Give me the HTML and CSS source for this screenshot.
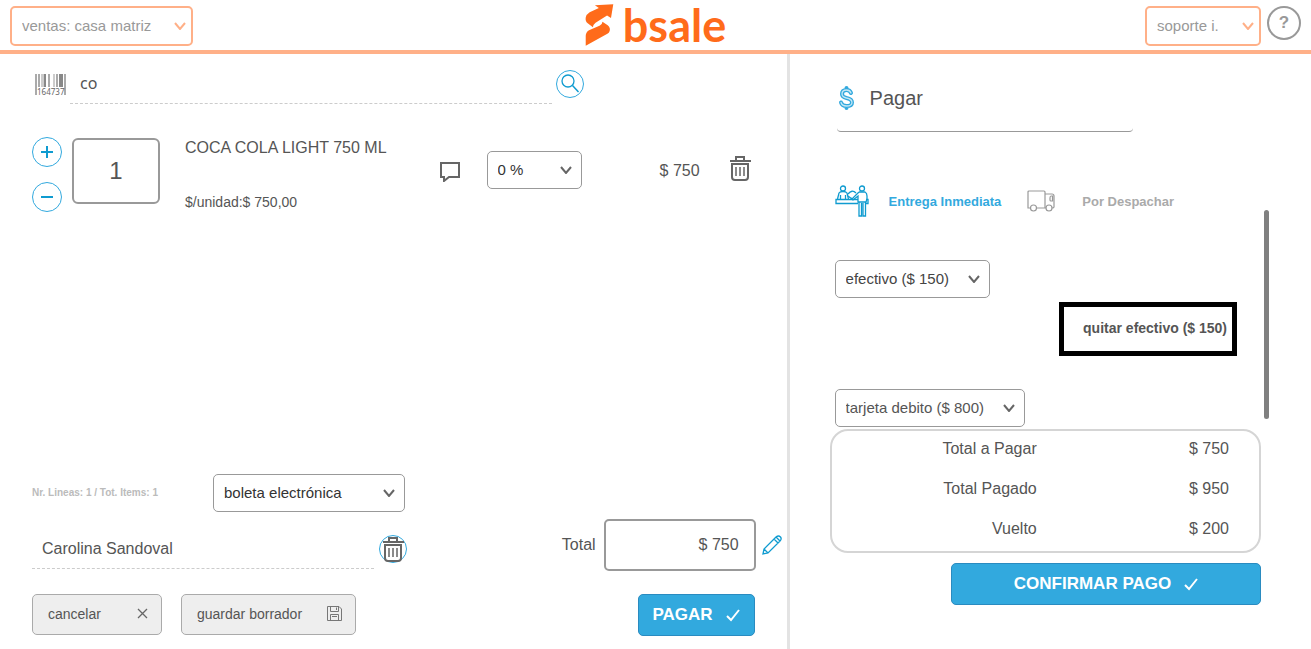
FILE: index.html
```html
<!DOCTYPE html>
<html lang="es">
<head>
  <meta charset="UTF-8">
  <meta name="viewport" content="width=device-width, initial-scale=1.0">
  <title>bsale</title>
  <link rel="stylesheet" href="styles.css">
</head>
<body>

<header class="topbar">
  <div class="topbar-left">
    <select class="select select-naranjo select-sucursal" aria-label="Sucursal">
      <option>ventas: casa matriz</option>
    </select>
  </div>
  <a class="logo" href="#">
    <svg width="29" height="42" viewBox="75 11 86 128" fill="#ff6b1a" aria-hidden="true">
      <path d="M160 12 L153 54 L141 46 L106 68 Q98 74 98 82 L82 70 Q74 63 76 52 Q77 43 88 36 L116 23 L104 15 Z"/>
      <path d="M127 65 L143 76 Q152 84 149 93 Q147 99 142 102 L76 138 L76 108 Q76 97 86 91 L118 77 Q127 73 127 65 Z"/>
    </svg>
    <span>bsale</span>
  </a>
  <div class="topbar-right">
    <select class="select select-naranjo select-usuario" aria-label="Usuario">
      <option>soporte i.</option>
    </select>
    <button class="btn-ayuda" type="button">?</button>
  </div>
</header>

<main class="pos">

  <section class="venta">
    <div class="buscador">
      <svg class="barcode" width="31" height="22" viewBox="0 0 31 22" aria-hidden="true">
        <g fill="#aaa">
          <rect x="0" width="2" height="21"/><rect x="3" width="2" height="13"/><rect x="6" width="3" height="13" fill="#ccc"/>
          <rect x="9" width="2" height="13" fill="#888"/><rect x="13" width="2" height="13"/><rect x="18" width="2" height="13" fill="#ccc"/>
          <rect x="21" width="2" height="13"/><rect x="24" width="4" height="13" fill="#888"/><rect x="29" width="2" height="21"/>
        </g>
        <text x="2" y="21" font-size="8" font-family="Noto Sans, sans-serif" fill="#666">164737</text>
      </svg>
      <input class="input-buscar" type="text" value="co" aria-label="Buscar producto">
      <button class="btn-circulo btn-buscar" type="button" aria-label="Buscar">
        <svg width="20" height="20" viewBox="0 0 20 20" fill="none" stroke="#0f9bd0">
          <circle cx="8" cy="7" r="6" stroke-width="1.300"/>
          <path d="M12.500 11.500 L18.500 18" stroke-width="1.500"/>
        </svg>
      </button>
    </div>

    <div class="item">
      <div class="item-botones">
        <button class="btn-circulo" type="button" aria-label="Agregar uno">
          <svg width="14" height="14" viewBox="0 0 14 14" stroke="#0f9bd0" stroke-width="2"><path d="M1 7 H13 M7 1 V13"/></svg>
        </button>
        <button class="btn-circulo" type="button" aria-label="Quitar uno">
          <svg width="14" height="14" viewBox="0 0 14 14" stroke="#0f9bd0" stroke-width="2"><path d="M1 7 H13"/></svg>
        </button>
      </div>
      <input class="input-cantidad" type="text" value="1" aria-label="Cantidad">
      <div class="item-nombre">
        <p>COCA COLA LIGHT 750 ML</p>
        <p class="item-unidad">$/unidad:$ 750,00</p>
      </div>
      <button class="btn-icono btn-comentario" type="button" aria-label="Comentario">
        <svg width="20" height="20" viewBox="0 0 20 20" fill="none" stroke="#666" stroke-width="2"><path d="M1 1 H19 V15 H9 L4 19 V15 H1 Z"/></svg>
      </button>
      <select class="select select-descuento" aria-label="Descuento">
        <option>0 %</option>
      </select>
      <span class="item-precio">$ 750</span>
      <button class="btn-icono btn-eliminar" type="button" aria-label="Eliminar">
        <svg width="21" height="26" viewBox="0 0 21 26" fill="none" stroke="#666" stroke-width="2">
          <path d="M0 6 H21 M6 6 V2 H14 V6 M2 9 H18 V22 Q18 25 15 25 H5 Q2 25 2 22 Z"/>
          <path d="M6 12 V21 M10 12 V21 M14 12 V21" stroke-width="1.500"/>
        </svg>
      </button>
    </div>

    <div class="pie">
      <div class="pie-fila">
        <span class="contador">Nr. Lineas: 1 / Tot. Items: 1</span>
        <select class="select select-documento" aria-label="Tipo de documento">
          <option>boleta electrónica</option>
        </select>
      </div>
      <div class="pie-fila pie-cliente">
        <input class="input-cliente" type="text" value="Carolina Sandoval" aria-label="Cliente">
        <button class="btn-circulo btn-quitar-cliente" type="button" aria-label="Quitar cliente">
          <svg width="21" height="26" viewBox="0 0 21 26" fill="none" stroke="#666" stroke-width="2">
            <path d="M0 6 H21 M6 6 V2 H14 V6 M2 9 H18 V22 Q18 25 15 25 H5 Q2 25 2 22 Z"/>
            <path d="M6 12 V21 M10 12 V21 M14 12 V21" stroke-width="1.500"/>
          </svg>
        </button>
        <div class="total">
          <label for="total">Total</label>
          <input class="input-total" id="total" type="text" value="$ 750">
          <button class="btn-icono" type="button" aria-label="Editar total">
            <svg width="20" height="20" viewBox="0 0 20 20" fill="none" stroke="#0f9bd0" stroke-width="1.300">
              <path d="M1 19 L2 14 L14 2 Q16.500 0 18.500 2 Q20 4 18 6 L6 18 Z M12 4 L16 8 M14 2 L18 6 M2 14 L6 18"/>
            </svg>
          </button>
        </div>
      </div>
      <div class="pie-fila pie-acciones">
        <button class="btn-gris btn-cancelar" type="button">
          cancelar
          <svg width="11" height="11" viewBox="0 0 11 11" stroke="#666" stroke-width="1.300"><path d="M1 1 L10 10 M10 1 L1 10"/></svg>
        </button>
        <button class="btn-gris btn-borrador" type="button">
          guardar borrador
          <svg width="15" height="15" viewBox="0 0 15 15" fill="none" stroke="#777"><path d="M0.500 0.500 H12 L14.500 3 V14.500 H0.500 Z M3.500 0.500 V5.500 H11.500 V0.500 M9.500 1.500 V4 M3.500 14.500 V8.500 H11.500 V14.500 M5 10.500 H10"/></svg>
        </button>
        <button class="btn-azul btn-pagar" type="button">
          PAGAR
          <svg width="14" height="13" viewBox="0 0 14 13" fill="none" stroke="#fff" stroke-width="2"><path d="M1 7 L5 11 L13 1"/></svg>
        </button>
      </div>
    </div>
  </section>

  <section class="pago">
    <h2 class="pago-titulo">
      <svg width="19" height="24" viewBox="0 0 19 24" fill="none" stroke-linecap="round" aria-hidden="true">
        <path d="M14 7 Q13 4 9.500 4 Q5 4 5 8 Q5 11 9.500 12 Q15 13 15 16.500 Q15 20 9.500 20 Q5 20 4 16.500 M9.500 2 V4 M9.500 20 V22" stroke="#32a9de" stroke-width="4"/>
        <path d="M14 7 Q13 4 9.500 4 Q5 4 5 8 Q5 11 9.500 12 Q15 13 15 16.500 Q15 20 9.500 20 Q5 20 4 16.500" stroke="#c5e7f5" stroke-width="1.300"/>
      </svg>
      Pagar
    </h2>

    <div class="pago-scroll">
      <div class="pago-contenido">
        <div class="entrega">
          <a class="entrega-opcion activa" href="#">
            <svg width="34" height="32" viewBox="0 0 34 32" fill="none" stroke="#0f9bd0" stroke-width="1.300" aria-hidden="true">
              <circle cx="8" cy="3.500" r="2.500"/>
              <path d="M2.500 14 L4 8 Q5 6.500 8 6.500 Q11 6.500 12 8 L13.500 14 M5.500 14 V10 M10.500 14 V10"/>
              <path d="M13 9 Q17 4 21 8 M13 11 L17 14 L24 7"/>
              <circle cx="27" cy="3.500" r="2.500"/>
              <path d="M24 7 H30 Q32 8 32 11 V14 L31 17 H23 V11 L18 15 L16 13"/>
              <path d="M23 14.500 H1 V18.500 H23 M31 14.500 H33 V18.500 H31 M24 17 V31 H26.500 V18 M28 18 V31 H30.500 V17"/>
            </svg>
            Entrega Inmediata
          </a>
          <a class="entrega-opcion" href="#">
            <svg width="28" height="22" viewBox="0 0 28 22" fill="none" stroke="#999" stroke-width="1.200" aria-hidden="true">
              <path d="M3 18 H1 V2 Q1 1 2 1 H17 Q18 1 18 2 V18 H9 M18 4 H25 Q27 4 27 6 V17 Q27 18 25 18 M18 18 H19 M25.500 6 H24 Q23 6 23 8 V10 Q23 11 24 11 H25.500 Z"/>
              <circle cx="6.500" cy="18" r="3"/>
              <circle cx="22" cy="18" r="3"/>
            </svg>
            Por Despachar
          </a>
        </div>
        <select class="select select-efectivo" aria-label="Efectivo">
          <option>efectivo ($ 150)</option>
        </select>
        <button class="btn-quitar" type="button">quitar efectivo ($ 150)</button>
        <select class="select select-debito" aria-label="Tarjeta debito">
          <option>tarjeta debito ($ 800)</option>
        </select>
      </div>
      <div class="barra-scroll"></div>
    </div>

    <table class="resumen">
      <tr><th>Total a Pagar</th><td>$ 750</td></tr>
      <tr><th>Total Pagado</th><td>$ 950</td></tr>
      <tr><th>Vuelto</th><td>$ 200</td></tr>
    </table>

    <button class="btn-azul btn-confirmar" type="button">
      CONFIRMAR PAGO
      <svg width="14" height="13" viewBox="0 0 14 13" fill="none" stroke="#fff" stroke-width="2"><path d="M1 7 L5 11 L13 1"/></svg>
    </button>
  </section>

</main>

</body>
</html>
```
FILE: styles.css
```css
* {
  box-sizing: border-box;
}
body {
  margin: 0;
  min-height: 100vh;
  display: flex;
  flex-direction: column;
  font-family: "Liberation Sans", Arial, sans-serif;
  font-size: 16px;
  color: #555;
  background-color: #fff;
}
input, select, button {
  font-family: inherit;
  color: inherit;
  margin: 0;
}
button {
  cursor: pointer;
}
p {
  margin: 0;
}
svg {
  display: block;
  flex: none;
}

/* barra superior */
.topbar {
  display: grid;
  grid-template-columns: 1fr auto 1fr;
  align-items: center;
  height: 54px;
  padding: 0 10px;
  border-bottom: 4px solid #ffb088;
}
.topbar-left {
  padding-top: 2px;
}
.topbar-right {
  display: flex;
  justify-content: flex-end;
  gap: 6px;
  padding-top: 2px;
}
.logo {
  display: flex;
  align-items: center;
  gap: 9px;
  font-family: Lato, sans-serif;
  font-size: 45px;
  font-weight: bold;
  line-height: 48px;
  color: #ff6b1a;
  text-decoration: none;
}
.btn-ayuda {
  width: 34px;
  height: 34px;
  padding: 0;
  border: 2px solid #999;
  border-radius: 50%;
  background: none;
  color: #999;
  font-size: 17px;
  font-weight: bold;
}

/* selects */
.select {
  appearance: none;
  display: block;
  height: 38px;
  padding: 0 10px 1px;
  border: 1px solid #999;
  border-radius: 5px;
  font-size: 15px;
  background: #fff url("data:image/svg+xml,%3Csvg xmlns='http://www.w3.org/2000/svg' width='12' height='8' fill='none' stroke='%23666' stroke-width='2'%3E%3Cpath d='M1 1L6 7L11 1'/%3E%3C/svg%3E") no-repeat right 9px center;
}
.select-naranjo {
  height: 40px;
  border: 2px solid #ffb088;
  color: #999;
  background-image: url("data:image/svg+xml,%3Csvg xmlns='http://www.w3.org/2000/svg' width='12' height='8' fill='none' stroke='%23ffb088' stroke-width='2'%3E%3Cpath d='M1 1L6 7L11 1'/%3E%3C/svg%3E");
  background-position: right 5px center;
}
.select-sucursal {
  width: 183px;
}
.select-usuario {
  width: 116px;
}
.select-descuento {
  width: 95px;
  color: #333;
}
.select-documento {
  width: 192px;
  color: #333;
}
.select-efectivo {
  width: 155px;
  color: #444;
}
.select-debito {
  width: 190px;
}

.pos {
  flex: 1;
  display: grid;
  grid-template-columns: 3fr 2fr;
}

/* columna de venta */
.venta {
  display: flex;
  flex-direction: column;
  padding: 16px 5px 13px 32px;
}
.buscador {
  display: flex;
  gap: 4px;
}
.barcode {
  margin: 4px 0 0 3px;
}
.input-buscar {
  flex: 1;
  max-width: 482px;
  height: 34px;
  padding: 0 10px 7px;
  border: 0;
  border-bottom: 1px dashed #ccc;
  font-family: "Noto Sans", sans-serif;
  font-size: 16px;
}
.btn-circulo {
  display: flex;
  flex: none;
  align-items: center;
  justify-content: center;
  width: 30px;
  height: 30px;
  padding: 0;
  border: 1px solid #32a9de;
  border-radius: 50%;
  background: none;
}
.btn-buscar, .btn-quitar-cliente {
  width: 28px;
  height: 28px;
}
.btn-icono {
  padding: 0;
  border: 0;
  background: none;
}
.item {
  display: flex;
  align-items: center;
  margin-top: 32px;
  padding-right: 31px;
}
.item-botones {
  display: flex;
  flex-direction: column;
  gap: 15px;
}
.input-cantidad {
  width: 88px;
  height: 66px;
  margin: 0 25px 6px 10px;
  border: 2px solid #999;
  border-radius: 6px;
  font-size: 24px;
  text-align: center;
}
.item-nombre {
  flex: 1;
  padding-top: 2px;
  line-height: 20px;
}
.item-unidad {
  margin-top: 34px;
  font-size: 14px;
}
.btn-comentario {
  margin: 0 27px 4px 0;
}
.item .select-descuento {
  margin-bottom: 8px;
}
.item-precio {
  width: 118px;
  margin: 0 30px 6px 0;
  text-align: right;
}
.btn-eliminar {
  margin-bottom: 12px;
}
.pie {
  margin-top: auto;
}
.pie-fila {
  display: flex;
  align-items: center;
}
.contador {
  width: 181px;
  padding-bottom: 2px;
  font-size: 10px;
  font-weight: bold;
  color: #bbb;
}
.pie-cliente {
  margin: 7px 0 23px;
}
.input-cliente {
  width: 342px;
  height: 40px;
  margin-top: 8px;
  padding: 0 10px;
  border: 0;
  border-bottom: 1px dashed #ccc;
  font-size: 16px;
}
.btn-quitar-cliente {
  margin: 8px 0 0 5px;
}
.total {
  display: flex;
  align-items: center;
  gap: 8px;
  margin-left: auto;
}
.total .btn-icono {
  margin-left: -2px;
}
.input-total {
  width: 152px;
  height: 52px;
  padding: 0 15px;
  border: 2px solid #999;
  border-radius: 5px;
  font-size: 16px;
  text-align: right;
}
.pie-acciones {
  align-items: flex-start;
  gap: 19px;
}
.btn-gris {
  display: flex;
  align-items: center;
  justify-content: space-between;
  height: 41px;
  padding: 0 13px 2px 15px;
  border: 1px solid #aaa;
  border-radius: 5px;
  background-color: #eee;
  font-size: 14px;
}
.btn-cancelar {
  width: 130px;
}
.btn-borrador {
  width: 175px;
}
.btn-azul {
  display: flex;
  align-items: center;
  justify-content: center;
  gap: 13px;
  height: 42px;
  border: 1px solid #2a8bc0;
  border-radius: 5px;
  background-color: #32a9de;
  color: #fff;
  font-size: 17px;
  font-weight: bold;
}
.btn-pagar {
  width: 117px;
  margin: 0 27px 0 auto;
}

/* columna de pago */
.pago {
  padding: 20px 42px 20px 40px;
  border-left: 3px solid #e3e3e3;
}
.pago-titulo {
  display: flex;
  align-items: center;
  gap: 14px;
  width: 296px;
  height: 58px;
  margin: 0 0 0 7px;
  padding-bottom: 9px;
  border-bottom: 1px solid #999;
  border-radius: 4px;
  font-size: 20px;
  font-weight: normal;
}
.pago-scroll {
  display: flex;
}
.pago-contenido {
  flex: 1;
  padding: 53px 27px 2px 5px;
}
.entrega {
  display: flex;
  gap: 26px;
  margin-bottom: 43px;
}
.entrega-opcion {
  display: flex;
  align-items: center;
  gap: 27px;
  font-size: 13px;
  font-weight: bold;
  color: #aaa;
  text-decoration: none;
}
.entrega-opcion.activa {
  gap: 20px;
  color: #32a9de;
}
.btn-quitar {
  display: block;
  height: 54px;
  margin: 4px 0 33px auto;
  padding: 0 5px 3px 19px;
  border: 5px solid #000;
  background: #fff;
  font-size: 14px;
  font-weight: bold;
}
.barra-scroll {
  align-self: flex-end;
  width: 5px;
  height: 209px;
  margin-bottom: 10px;
  border-radius: 3px;
  background-color: #808080;
}
.resumen {
  width: calc(100% - 8px);
  border: 2px solid #d5d5d5;
  border-radius: 18px;
  border-spacing: 0;
}
.resumen th, .resumen td {
  height: 40px;
  padding: 0 30px 4px 0;
  font-weight: normal;
  text-align: right;
}
.resumen th {
  width: 48%;
  padding-right: 0;
}
.btn-confirmar {
  width: 310px;
  margin: 10px 8px 0 auto;
}
```
